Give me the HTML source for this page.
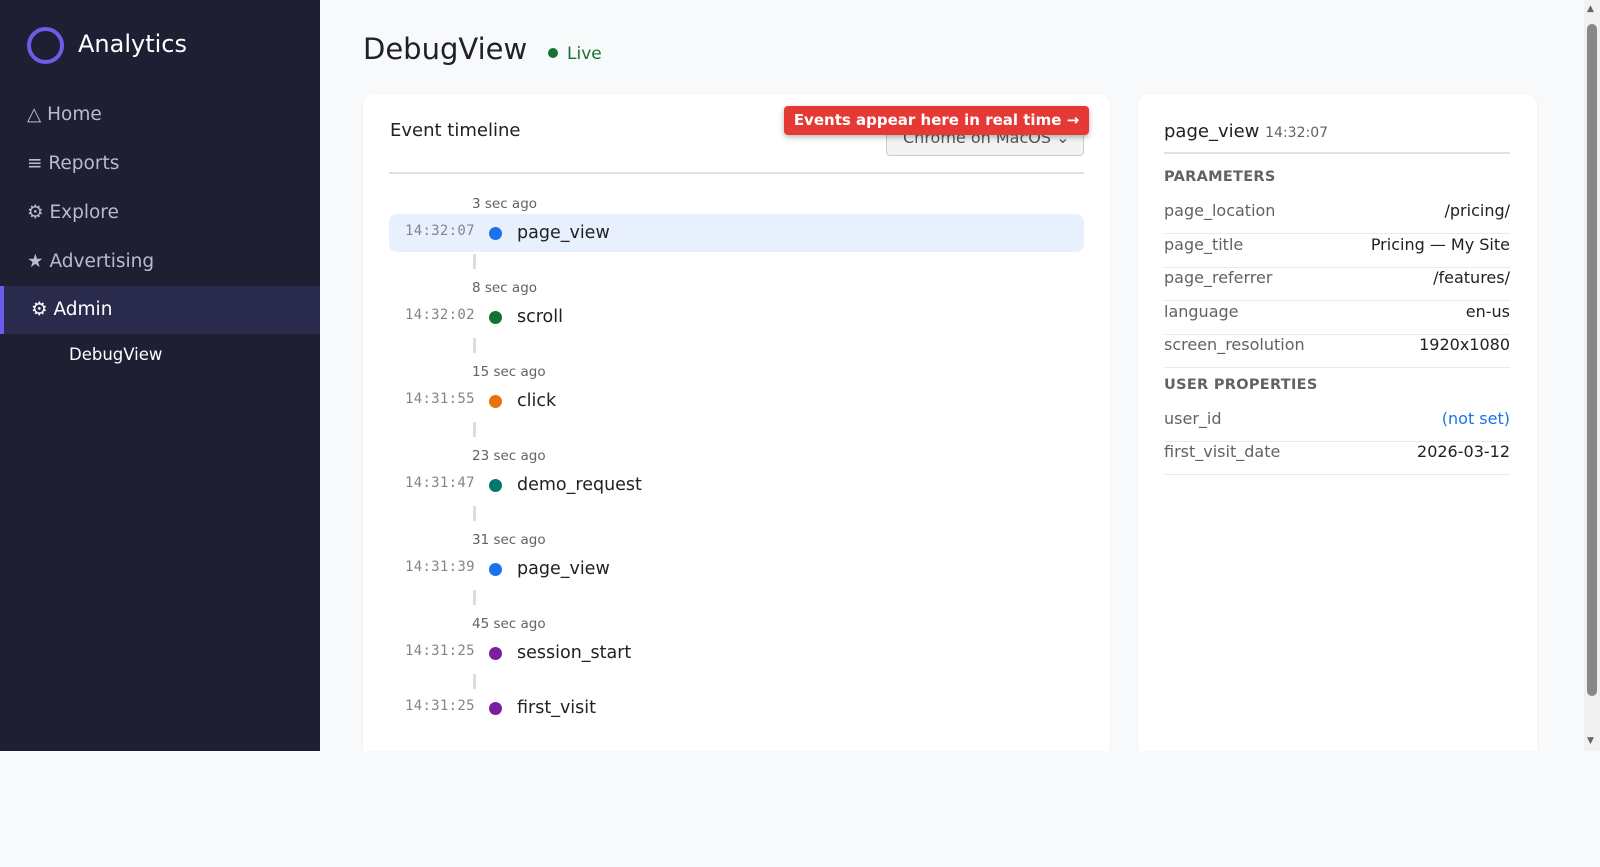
<!DOCTYPE html>
<html><head><meta charset="utf-8"><style>
*{box-sizing:border-box;margin:0;padding:0}
body{width:1600px;height:867px;background:#f8f9fa;font-family:"DejaVu Sans","Liberation Sans",sans-serif;position:relative;overflow:hidden}
.side{position:absolute;left:0;top:0;width:320px;height:751px;background:#1f1f33}
.logo{position:absolute;left:27px;top:27px;width:37px;height:37px;border:4px solid #6c5ce7;border-radius:50%}
.brand{position:absolute;left:78px;top:30px;color:#fff;font-size:24px}
.nav{position:absolute;left:27px;color:#b8bccb;font-size:18.5px}
.admin{position:absolute;left:0;top:286px;width:320px;height:48px;background:#2a2a4d;border-left:4px solid #6c5ce7;color:#fff;font-size:18.5px;padding:13px 0 0 27px}
.sub{position:absolute;left:69px;top:345px;color:#fff;font-size:16.5px}
h1{position:absolute;left:363px;top:32px;font-weight:normal;font-size:29px;color:#202124}
.live{position:absolute;left:548px;top:44px;color:#137333;font-size:17px}
.live:before{content:"";display:inline-block;width:10px;height:10px;border-radius:50%;background:#137333;margin-right:9px;vertical-align:1px}
.card{position:absolute;background:#fff;border-radius:12px;top:94px;height:680px;box-shadow:0 1px 2px rgba(0,0,0,.06)}
.t{position:absolute;font-size:18px;color:#202124}
.sel{position:absolute;left:886px;top:118px;width:198px;height:38px;border:1px solid #ccc;border-radius:4px;background:#f1f3f4;color:#555;font-size:16px;padding:9px 0 0 16px}
.badge{position:absolute;left:784px;top:106px;width:305px;height:29px;background:#e53935;border-radius:4px;color:#fff;font-weight:bold;font-size:15px;text-align:center;line-height:29px;box-shadow:0 2px 6px rgba(0,0,0,.3)}
.ago{position:absolute;left:472px;font-size:13.5px;color:#5f6368}
.tm{position:absolute;left:405px;font-family:"DejaVu Sans Mono","Liberation Mono",monospace;font-size:14px;letter-spacing:.3px;color:#80868b}
.dot{position:absolute;left:489px;width:13px;height:13px;border-radius:50%}
.nm{position:absolute;left:517px;font-size:17.5px;color:#202124}
.ln{position:absolute;left:473px;width:3px;height:15px;background:#ddd}
.hl{position:absolute;left:389px;top:214px;width:695px;height:38px;background:#e8f0fe;border-radius:8px}
.pr{position:absolute;left:1164px;width:346px;height:34px;border-bottom:1px solid #e8eaed;font-size:16px;color:#5f6368;padding-top:1px}
.pr b{float:right;font-weight:normal;color:#202124}
.hd{position:absolute;left:1164px;font-size:14.5px;font-weight:bold;color:#5f6368;letter-spacing:.3px}
.sb{position:absolute;left:1584px;top:0;width:16px;height:751px;background:#f1f1f1}
.th{position:absolute;left:1587px;top:24px;width:10px;height:672px;background:#888;border-radius:5px}
</style></head><body>
<div class="side">
<div class="logo"></div><div class="brand">Analytics</div>
<div class="nav" style="top:104px">△ Home</div>
<div class="nav" style="top:153px">≡ Reports</div>
<div class="nav" style="top:202px">⚙ Explore</div>
<div class="nav" style="top:251px">★ Advertising</div>
<div class="admin">⚙ Admin</div>
<div class="sub">DebugView</div>
</div>
<h1>DebugView</h1><div class="live">Live</div>
<div class="card" style="left:363px;width:747px"></div>
<div class="card" style="left:1138px;width:399px"></div>
<div style="position:absolute;left:0;top:751px;width:1600px;height:116px;background:#f8f9fa"></div>
<div class="t" style="left:390px;top:120px">Event timeline</div>
<div class="sel">Chrome on MacOS ⌄</div>
<div class="badge">Events appear here in real time →</div>
<div style="position:absolute;left:389px;top:172px;width:695px;height:2px;background:#e0e0e0"></div>
<div class="hl"></div>
<div class="ago" style="top:196px">3 sec ago</div>
<div class="tm" style="top:223px">14:32:07</div><div class="dot" style="top:227px;background:#1a73e8"></div><div class="nm" style="top:223px">page_view</div>
<div class="ln" style="top:254px"></div>
<div class="ago" style="top:280px">8 sec ago</div>
<div class="tm" style="top:307px">14:32:02</div><div class="dot" style="top:311px;background:#137333"></div><div class="nm" style="top:307px">scroll</div>
<div class="ln" style="top:338px"></div>
<div class="ago" style="top:364px">15 sec ago</div>
<div class="tm" style="top:391px">14:31:55</div><div class="dot" style="top:395px;background:#e8710a"></div><div class="nm" style="top:391px">click</div>
<div class="ln" style="top:422px"></div>
<div class="ago" style="top:448px">23 sec ago</div>
<div class="tm" style="top:475px">14:31:47</div><div class="dot" style="top:479px;background:#00796b"></div><div class="nm" style="top:475px">demo_request</div>
<div class="ln" style="top:506px"></div>
<div class="ago" style="top:532px">31 sec ago</div>
<div class="tm" style="top:559px">14:31:39</div><div class="dot" style="top:563px;background:#1a73e8"></div><div class="nm" style="top:559px">page_view</div>
<div class="ln" style="top:590px"></div>
<div class="ago" style="top:616px">45 sec ago</div>
<div class="tm" style="top:643px">14:31:25</div><div class="dot" style="top:647px;background:#7b1fa2"></div><div class="nm" style="top:643px">session_start</div>
<div class="ln" style="top:674px"></div>
<div class="tm" style="top:698px">14:31:25</div><div class="dot" style="top:702px;background:#7b1fa2"></div><div class="nm" style="top:698px">first_visit</div>
<div class="t" style="left:1164px;top:121px">page_view <span style="font-size:14px;color:#5f6368">14:32:07</span></div>
<div style="position:absolute;left:1164px;top:152px;width:346px;height:2px;background:#e0e0e0"></div>
<div class="hd" style="top:169px">PARAMETERS</div>
<div class="pr" style="top:200px">page_location<b>/pricing/</b></div>
<div class="pr" style="top:234px">page_title<b>Pricing — My Site</b></div>
<div class="pr" style="top:267px">page_referrer<b>/features/</b></div>
<div class="pr" style="top:301px">language<b>en-us</b></div>
<div class="pr" style="top:334px">screen_resolution<b>1920x1080</b></div>
<div class="hd" style="top:377px">USER PROPERTIES</div>
<div class="pr" style="top:408px">user_id<b style="color:#1a73e8">(not set)</b></div>
<div class="pr" style="top:441px">first_visit_date<b>2026-03-12</b></div>
<div class="sb"></div><div class="th"></div>
<div style="position:absolute;left:1587px;top:4px;color:#666;font-size:9px">▲</div>
<div style="position:absolute;left:1587px;top:736px;color:#666;font-size:9px">▼</div>
</body></html>
